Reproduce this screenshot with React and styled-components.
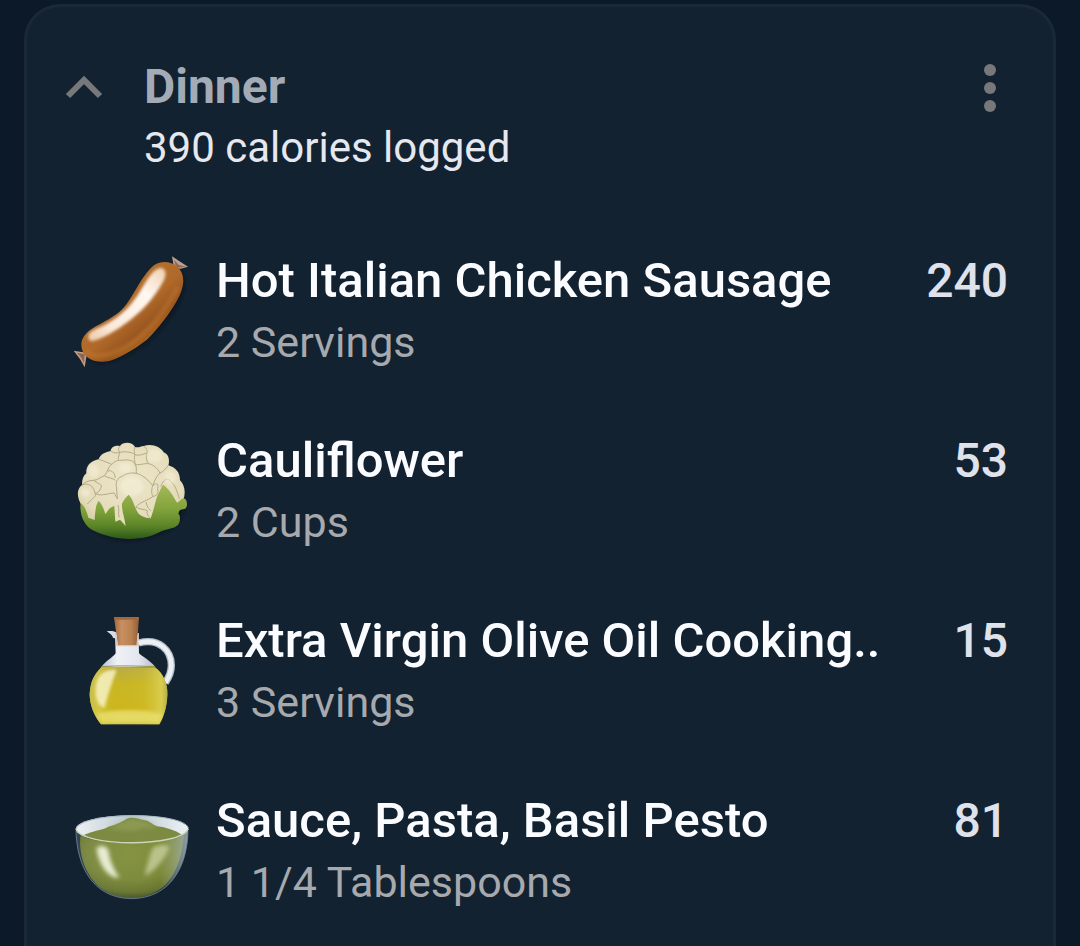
import React from 'react';
import styled, { createGlobalStyle } from 'styled-components';

const GlobalStyle = createGlobalStyle`
  * {
    box-sizing: border-box;
  }

  body {
    margin: 0;
    background: #0b1929;
    font-family: Roboto, 'Liberation Sans', sans-serif;
  }
`;

const Page = styled.main`
  display: flex;
  min-height: 100vh;
  padding: 4px 24px 0;
`;

const Card = styled.section`
  flex: 1;
  min-width: 0;
  padding: 51px 45px 0;
  background: #132231;
  border: 3px solid #1a2937;
  border-bottom: none;
  border-radius: 36px 36px 0 0;
`;

const Header = styled.header`
  display: flex;
  align-items: flex-start;
  padding-bottom: 42px;
`;

const HeaderText = styled.div`
  flex: 1;
  min-width: 0;
`;

const IconButton = styled.button`
  display: flex;
  align-items: center;
  justify-content: ${({ $align }) => $align};
  width: ${({ $width }) => $width};
  height: 60px;
  padding: 0;
  border: none;
  background: none;
  color: #77787a;
  cursor: pointer;
`;

const MealName = styled.h2`
  margin: 0;
  font-size: 48px;
  font-weight: 700;
  line-height: 58px;
  color: #a3abb6;
`;

const Total = styled.p`
  margin: 0;
  font-size: 42px;
  line-height: 64px;
  color: #e5e8ef;
`;

const FoodList = styled.ul`
  list-style: none;
  margin: 0;
  padding: 0;
`;

const FoodRow = styled.li`
  display: flex;
  align-items: flex-start;
  gap: 24px;
  padding: 30px 0 28px;
`;

const Picture = styled.svg`
  flex: none;
  width: 120px;
  height: 120px;
`;

const FoodText = styled.div`
  flex: 1;
  min-width: 0;
`;

const FoodName = styled.h3`
  margin: 0;
  overflow: hidden;
  font-size: 49px;
  font-weight: 500;
  line-height: 58px;
  color: #fbfcff;
  white-space: nowrap;
`;

const Amount = styled.p`
  margin: 0;
  font-size: 43px;
  line-height: 64px;
  color: #a6a9ad;
`;

const Calories = styled.span`
  font-size: 48px;
  font-weight: 500;
  line-height: 58px;
  color: #dfe2ea;
`;

function Sausage() {
  return (
    <Picture viewBox="36 21 360 360" aria-hidden="true">
      <defs>
        <linearGradient id="sausageSkin" x1="0.3" y1="0.3" x2="0.7" y2="0.75">
          <stop offset="0" stopColor="#b36e2b" />
          <stop offset="0.5" stopColor="#b0692a" />
          <stop offset="0.8" stopColor="#99561f" />
          <stop offset="1" stopColor="#a9641f" />
        </linearGradient>
        <linearGradient id="sausageShine" x1="1" y1="0" x2="0" y2="1">
          <stop offset="0" stopColor="#efcfae" />
          <stop offset="0.3" stopColor="#fff8f2" />
          <stop offset="0.75" stopColor="#fbeadc" />
          <stop offset="1" stopColor="#eccaa6" />
        </linearGradient>
        <filter id="sausageSoft" x="-20%" y="-20%" width="140%" height="140%">
          <feGaussianBlur stdDeviation="4" />
        </filter>
      </defs>
      <path d="M66 300C70 250 150 250 210 165C240 120 265 65 305 55C345 45 375 80 371 125C363 180 300 255 260 290C210 330 150 355 110 350C80 345 66 325 66 300Z" transform="translate(3 4)" fill="#0a1420" filter="url(#sausageSoft)" />
      <path d="M336 34L356 47L384 65L362 71L342 68Z" fill="#c0a191" />
      <path d="M342 44L356 59L380 66L348 68Z" fill="#8c6c5a" />
      <path d="M41 317L70 322L80 330L74 367L60 342Z" fill="#c39d84" />
      <path d="M51 323L74 328L72 355L64 339Z" fill="#8c6650" />
      <path d="M64 302C64 253 122 244 177 202C218 168 240 94 282 61C304 47 332 48 352 65C377 87 375 124 350 169C325 211 297 249 260 285C222 314 173 343 143 349C99 356 65 334 64 302Z" fill="url(#sausageSkin)" />
      <path d="M76 317C98 345 158 333 207 300C268 260 316 196 355 125" fill="none" stroke="#c67c31" strokeWidth="16" opacity="0.4" filter="url(#sausageSoft)" />
      <path d="M85 276C84 262 100 256 120 247C166 227 206 192 235 148C256 115 272 78 298 69C319 66 321 88 311 107C284 157 250 194 208 227C166 259 124 282 99 288C89 289 85 284 85 276Z" fill="url(#sausageShine)" filter="url(#sausageSoft)" />
    </Picture>
  );
}

function Cauliflower() {
  return (
    <Picture viewBox="36 6 360 360" aria-hidden="true">
      <defs>
        <radialGradient id="curd" cx="0.5" cy="0.4" r="0.65">
          <stop offset="0" stopColor="#ece5c8" />
          <stop offset="0.75" stopColor="#e4dcba" />
          <stop offset="1" stopColor="#cfc696" />
        </radialGradient>
        <linearGradient id="leaf" x1="0" y1="0" x2="0" y2="1">
          <stop offset="0" stopColor="#a2b958" />
          <stop offset="0.45" stopColor="#82a33c" />
          <stop offset="0.75" stopColor="#5d8629" />
          <stop offset="1" stopColor="#2d5a17" />
        </linearGradient>
        <filter id="curdSoft" x="-20%" y="-20%" width="140%" height="140%">
          <feGaussianBlur stdDeviation="4" />
        </filter>
      </defs>
      <path d="M64 220Q70 325 200 334Q330 326 367 260L380 220Z" fill="#0a1420" filter="url(#curdSoft)" />
      <path d="M57 210C51 192 52 176 66 165C66 148 70 137 79 130C78 108 92 92 116 88C121 72 137 66 152 63C153 49 169 45 180 48C188 36 216 34 225 51C237 54 241 49 251 48C275 39 302 50 311 67C328 73 329 94 325 106C346 112 360 126 360 151C374 166 378 187 370 209L340 285L200 305L90 285Z" fill="url(#curd)" />
      <g fill="none" stroke="#b3ab86" strokeWidth="3" strokeLinejoin="round">
        <path d="M116 88C130 92 145 99 155 103C164 94 174 89 187 91C206 87 222 92 226 104C231 112 228 123 229 130C214 127 198 130 186 139C170 145 166 157 170 177L172 207" />
        <path d="M155 103C143 111 144 127 133 137C120 142 112 151 101 151C85 151 74 157 66 165C86 157 101 168 105 190C112 196 98 204 92 212" />
        <path d="M133 137C143 145 158 143 166 151M144 123C154 120 164 126 166 144M101 151C111 158 119 162 125 167C121 180 114 190 105 190M105 190C121 200 138 191 162 189L173 207" />
        <path d="M152 63C165 72 174 68 179 67C191 64 216 65 225 74M180 48C174 55 175 62 179 67L174 89M225 51C221 61 223 70 225 74C235 78 249 74 261 68C264 62 258 55 251 48" />
        <path d="M225 74C221 85 224 92 226 104C242 105 259 99 265 101C258 91 258 78 261 68M265 101C279 103 292 114 300 129C309 126 317 116 325 106M229 130C244 132 267 151 278 167C285 152 287 140 300 129M278 167C273 181 275 196 279 199C264 212 242 214 228 231M279 199C294 197 295 188 293 176C297 162 291 156 278 167" />
        <path d="M302 170C310 148 320 143 329 151C347 165 351 185 358 206M258 216C261 230 265 235 273 243M92 212L82 222M226 231C242 240 252 236 262 242C259 251 264 258 269 264M174 225C180 240 172 252 178 262" />
      </g>
      <g fill="#f7f2dd" opacity="0.5" filter="url(#curdSoft)">
        <ellipse cx="100" cy="122" rx="16" ry="20" />
        <ellipse cx="195" cy="114" rx="20" ry="15" />
        <ellipse cx="215" cy="170" rx="34" ry="29" />
        <ellipse cx="284" cy="77" rx="23" ry="20" />
        <ellipse cx="330" cy="144" rx="18" ry="20" />
        <ellipse cx="76" cy="188" rx="14" ry="12" />
      </g>
      <path d="M62 219C71 225 79 239 85 263L104 270C105 245 108 221 116 213C125 219 132 238 136 252C143 245 145 233 163 228L166 275L180 269L197 288C194 263 184 239 186 221C190 212 196 203 206 194C222 211 223 234 236 251C246 261 258 263 272 265C284 235 286 205 299 184C302 177 304 170 310 164C335 185 342 203 351 218C363 214 363 202 376 207C384 218 382 234 373 237C361 238 357 241 355 251C361 255 361 268 358 278C352 292 337 294 318 299C290 306 280 321 235 325C190 331 141 321 103 303C74 292 57 254 62 219Z" fill="url(#leaf)" />
    </Picture>
  );
}

function OliveOil() {
  return (
    <Picture viewBox="6 21 360 360" aria-hidden="true">
      <defs>
        <linearGradient id="glass" x1="0" y1="0" x2="1" y2="0">
          <stop offset="0" stopColor="#b8c0d0" />
          <stop offset="0.3" stopColor="#eff1f6" />
          <stop offset="0.7" stopColor="#e3e6ed" />
          <stop offset="1" stopColor="#b1bac9" />
        </linearGradient>
        <linearGradient id="oil" x1="0" y1="0" x2="0" y2="1">
          <stop offset="0" stopColor="#b9ac45" />
          <stop offset="0.3" stopColor="#c9b624" />
          <stop offset="0.72" stopColor="#ccb61e" />
          <stop offset="0.86" stopColor="#ddd154" />
          <stop offset="1" stopColor="#cfc33e" />
        </linearGradient>
        <linearGradient id="oilEdge" x1="0" y1="0" x2="1" y2="0">
          <stop offset="0" stopColor="#c2bb50" />
          <stop offset="0.12" stopColor="#d9cf50" stopOpacity="0.6" />
          <stop offset="0.35" stopColor="#c9b51c" stopOpacity="0" />
          <stop offset="0.7" stopColor="#d8c83c" stopOpacity="0.2" />
          <stop offset="0.92" stopColor="#dcd25a" stopOpacity="0.8" />
          <stop offset="1" stopColor="#b6ad48" />
        </linearGradient>
        <linearGradient id="cork" x1="0" y1="0" x2="1" y2="0">
          <stop offset="0" stopColor="#9f6840" />
          <stop offset="0.3" stopColor="#c88f62" />
          <stop offset="0.7" stopColor="#b98050" />
          <stop offset="1" stopColor="#935c35" />
        </linearGradient>
        <filter id="oilSoft" x="-30%" y="-20%" width="160%" height="140%">
          <feGaussianBlur stdDeviation="4" />
        </filter>
      </defs>
      <path d="M206 114C270 97 304 139 304 181C304 201 298 216 286 233" fill="none" stroke="#b4bdca" strokeWidth="22" />
      <path d="M206 114C270 97 304 139 304 181C304 201 298 216 286 233" fill="none" stroke="#eceff4" strokeWidth="14" />
      <path d="M110 79C123 76 135 79 140 82L141 102L129 98C127 89 119 86 110 79Z" fill="#d8dde6" />
      <path d="M135 88H206L207 145C216 155 238 164 256 186L92 189C105 169 127 159 137 145Z" fill="url(#glass)" />
      <path d="M94 187H255C280 206 293 235 292 268C291 301 284 330 268 358H93C71 331 59 298 59 266C61 232 72 208 94 187Z" fill="url(#oil)" />
      <path d="M94 187H255C280 206 293 235 292 268C291 301 284 330 268 358H93C71 331 59 298 59 266C61 232 72 208 94 187Z" fill="url(#oilEdge)" />
      <path d="M94 185C147 181 204 183 255 185" fill="none" stroke="#969247" strokeWidth="3" />
      <path d="M98 204C113 193 128 193 140 195C124 236 112 276 103 309C86 304 76 282 77 255C78 232 83 216 98 204Z" fill="#f6f2c4" opacity="0.85" filter="url(#oilSoft)" />
      <path d="M84 326C142 312 224 312 275 329L266 354H97Z" fill="#ece373" opacity="0.6" filter="url(#oilSoft)" />
      <path d="M132 36H207L201 122H144Z" fill="url(#cork)" />
      <path d="M132 36H207L206 44H133Z" fill="#a0683f" />
      <path d="M137 84L141 122H201L205 84" fill="none" stroke="#d5c7bf" strokeWidth="4" />
    </Picture>
  );
}

function Pesto() {
  return (
    <Picture viewBox="36 -24 360 360" aria-hidden="true">
      <defs>
        <radialGradient id="sauce" cx="0.5" cy="0.3" r="0.68">
          <stop offset="0" stopColor="#84923e" />
          <stop offset="0.6" stopColor="#7c8a3a" />
          <stop offset="0.88" stopColor="#687630" />
          <stop offset="1" stopColor="#4d5a2c" />
        </radialGradient>
        <linearGradient id="bowlRim" x1="0" y1="0" x2="1" y2="0">
          <stop offset="0" stopColor="#edf1f4" />
          <stop offset="0.5" stopColor="#bac8cf" />
          <stop offset="1" stopColor="#eef2f5" />
        </linearGradient>
        <linearGradient id="bowlSide" x1="0" y1="0" x2="1" y2="0">
          <stop offset="0" stopColor="#a4b2b6" stopOpacity="0.1" />
          <stop offset="0.75" stopColor="#a8b69a" stopOpacity="0" />
          <stop offset="1" stopColor="#aebbc0" stopOpacity="0.8" />
        </linearGradient>
        <filter id="bowlSoft" x="-40%" y="-20%" width="180%" height="140%">
          <feGaussianBlur stdDeviation="6" />
        </filter>
      </defs>
      <path d="M48 93C49 190 91 294 215 296C334 294 384 196 384 93Z" fill="#26394a" />
      <path d="M62 106C52 170 88 293 215 295C316 292 362 218 372 106C312 135 115 138 62 106Z" fill="url(#sauce)" />
      <ellipse cx="216" cy="87" rx="169" ry="41" fill="url(#bowlRim)" />
      <path d="M70 106C98 91 128 91 145 80C166 74 181 69 199 57C217 47 239 58 256 61C271 65 279 76 292 79C318 82 345 91 366 104C318 136 117 137 70 106Z" fill="#7d8b42" />
      <path d="M145 84C174 74 194 60 216 57C247 60 273 68 292 83C269 88 259 80 242 87C211 98 177 88 145 84Z" fill="#9aa660" opacity="0.55" filter="url(#bowlSoft)" />
      <path d="M48 93C51 190 91 294 215 296C334 294 382 196 384 93C339 138 98 141 48 93Z" fill="url(#bowlSide)" />
      <path d="M109 144C121 134 138 136 145 150C149 184 162 208 178 233C152 236 118 205 109 144Z" fill="#eef1dc" opacity="0.95" filter="url(#bowlSoft)" />
      <path d="M278 143C296 133 316 131 328 141C316 178 286 211 254 229C260 196 269 166 278 143Z" fill="#d3d9ac" opacity="0.7" filter="url(#bowlSoft)" />
      <path d="M48 88C69 141 361 143 385 86" fill="none" stroke="#ccd5b6" strokeWidth="4" />
      <path d="M48 88C61 34 371 34 385 84" fill="none" stroke="#a8b8c4" strokeWidth="3" />
      <path d="M48 93C51 190 91 294 215 296C334 294 382 196 384 93" fill="none" stroke="#758793" strokeWidth="3" opacity="0.8" />
    </Picture>
  );
}

const foods = [
  { name: 'Hot Italian Chicken Sausage', amount: '2 Servings', calories: 240, Icon: Sausage },
  { name: 'Cauliflower', amount: '2 Cups', calories: 53, Icon: Cauliflower },
  { name: 'Extra Virgin Olive Oil Cooking..', amount: '3 Servings', calories: 15, Icon: OliveOil },
  { name: 'Sauce, Pasta, Basil Pesto', amount: '1 1/4 Tablespoons', calories: 81, Icon: Pesto },
];

export default function App() {
  return (
    <>
      <GlobalStyle />
      <Page>
        <Card>
          <Header>
            <IconButton type="button" $width="72px" $align="flex-start" aria-label="Collapse Dinner">
              <svg width="24" height="60" viewBox="0 0 24 60" overflow="visible" fill="none" stroke="currentColor" strokeWidth="6">
                <path d="M-4 38L12 22L28 38" />
              </svg>
            </IconButton>
            <HeaderText>
              <MealName>Dinner</MealName>
              <Total>390 calories logged</Total>
            </HeaderText>
            <IconButton type="button" $width="36px" $align="center" aria-label="Dinner options">
              <svg width="12" height="48" viewBox="0 0 12 48" fill="currentColor">
                <circle cx="6" cy="6" r="6" />
                <circle cx="6" cy="24" r="6" />
                <circle cx="6" cy="42" r="6" />
              </svg>
            </IconButton>
          </Header>
          <FoodList>
            {foods.map(({ name, amount, calories, Icon }) => (
              <FoodRow key={name}>
                <Icon />
                <FoodText>
                  <FoodName>{name}</FoodName>
                  <Amount>{amount}</Amount>
                </FoodText>
                <Calories>{calories}</Calories>
              </FoodRow>
            ))}
          </FoodList>
        </Card>
      </Page>
    </>
  );
}
